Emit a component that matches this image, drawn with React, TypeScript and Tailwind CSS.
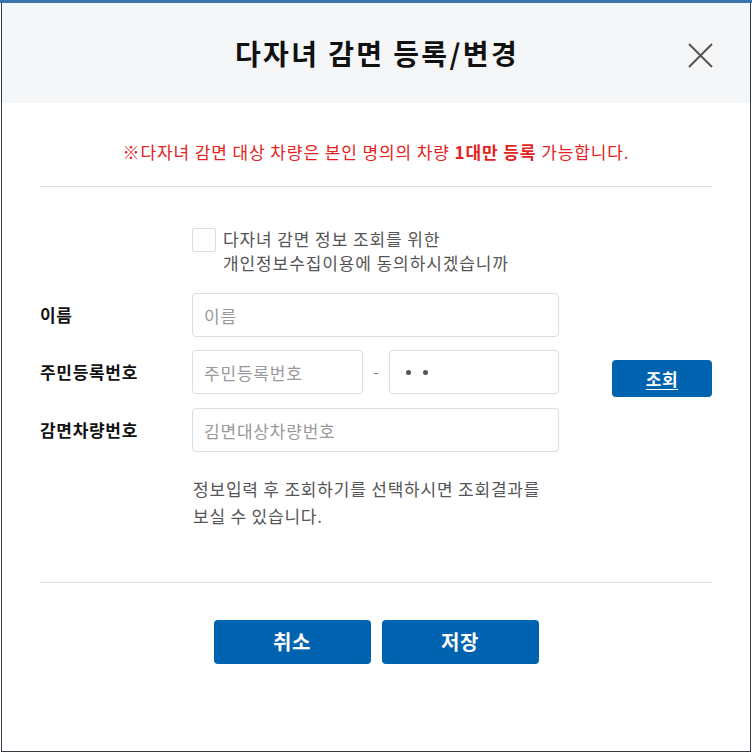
import React, { useState } from 'react';

const inputClass =
  'h-[44px] rounded-[4px] border border-[#dddddd] bg-white px-[11px] text-[17px] tracking-[0.8px] text-[#333] placeholder:text-[#999] outline-none';

export default function App() {
  const [agree, setAgree] = useState(false);
  const [name, setName] = useState('');
  const [rrnFront, setRrnFront] = useState('');
  const [carNo, setCarNo] = useState('');

  return (
    <div className="w-[752px] h-[753px] bg-white font-['Noto_Sans_CJK_KR','Noto_Sans',sans-serif]">
      <div className="h-[3px] bg-[#3c74ad]" />
      <div className="ml-[1px] w-[750px] h-[749px] border-x border-b border-[#343b45] flex flex-col">
        {/* 헤더 */}
        <div className="relative h-[100px] bg-[#f4f6f8] flex items-center justify-center">
          <h1 className="pl-[2px] text-[28px] font-bold text-[#111] leading-none tracking-[2.4px]">다자녀 감면 등록/변경</h1>
          <button className="absolute right-[37px] top-[40px] w-[25px] h-[25px] flex items-center justify-center">
            <svg width="25" height="25" viewBox="0 0 25 25" fill="none" stroke="#555" strokeWidth={2}>
              <path d="M1 1L24 24M24 1L1 24" />
            </svg>
          </button>
        </div>

        <div className="pl-[38px] pr-[38px]">
          <p className="pt-[38px] pb-[23px] text-center text-[17px] leading-[22px] text-[#e3231d] tracking-[0.9px]">
            ※다자녀 감면 대상 차량은 본인 명의의 차량 <b className="font-bold">1대만 등록</b> 가능합니다.
          </p>
          <div className="h-px bg-[#dddddd]" />

          {/* 동의 체크 */}
          <div className="mt-[41px] ml-[152px] flex items-start gap-[7px]">
            <button
              onClick={() => setAgree(!agree)}
              className={`w-[24px] h-[24px] border border-[#dddddd] rounded-[2px] ${agree ? 'bg-[#0063b0]' : 'bg-white'}`}
            />
            <div className="text-[17px] leading-[24px] tracking-[0.9px] text-[#555] -mt-[1px]">
              <div>다자녀 감면 정보 조회를 위한</div>
              <div>개인정보수집이용에 동의하시겠습니까</div>
            </div>
          </div>

          {/* 입력 폼 */}
          <div className="mt-[18px] flex flex-col gap-[13px]">
            <div className="flex items-center">
              <label className="w-[152px] text-[17px] tracking-[0.7px] font-bold text-[#111]">이름</label>
              <input
                className={`${inputClass} w-[367px]`}
                placeholder="이름"
                value={name}
                onChange={(e) => setName(e.target.value)}
              />
            </div>
            <div className="flex items-start h-[44px]">
              <label className="w-[152px] h-[44px] flex items-center text-[17px] tracking-[0.7px] font-bold text-[#111]">주민등록번호</label>
              <input
                className={`${inputClass} w-[171px]`}
                placeholder="주민등록번호"
                value={rrnFront}
                onChange={(e) => setRrnFront(e.target.value)}
              />
              <span className="w-[26px] h-[44px] flex items-center justify-center text-[#777] text-[15px]">-</span>
              <div className={`${inputClass} w-[170px] flex items-center gap-[12px] pl-[16px]`}>
                <span className="w-[5px] h-[5px] rounded-full bg-[#555]" />
                <span className="w-[5px] h-[5px] rounded-full bg-[#555]" />
              </div>
              <button className="ml-auto mt-[10px] shrink-0 w-[100px] h-[37px] rounded-[4px] bg-[#0063b0] text-white text-[17px] tracking-[0.5px] font-bold underline underline-offset-[3px]">
                조회
              </button>
            </div>
            <div className="mt-[1px] flex items-center">
              <label className="w-[152px] text-[17px] tracking-[0.7px] font-bold text-[#111]">감면차량번호</label>
              <input
                className={`${inputClass} w-[367px]`}
                placeholder="김면대상차량번호"
                value={carNo}
                onChange={(e) => setCarNo(e.target.value)}
              />
            </div>
          </div>

          <p className="mt-[23px] ml-[153px] text-[17px] leading-[27px] tracking-[0.8px] text-[#555]">
            정보입력 후 조회하기를 선택하시면 조회결과를
            <br />
            보실 수 있습니다.
          </p>

          <div className="mt-[53px] h-px bg-[#dddddd]" />

          <div className="mt-[37px] flex justify-center gap-[11px]">
            <button className="w-[157px] h-[44px] rounded-[4px] bg-[#0063b0] text-white text-[20px] tracking-[0.5px] font-bold">취소</button>
            <button className="w-[157px] h-[44px] rounded-[4px] bg-[#0063b0] text-white text-[20px] tracking-[0.5px] font-bold">저장</button>
          </div>
        </div>
      </div>
    </div>
  );
}
